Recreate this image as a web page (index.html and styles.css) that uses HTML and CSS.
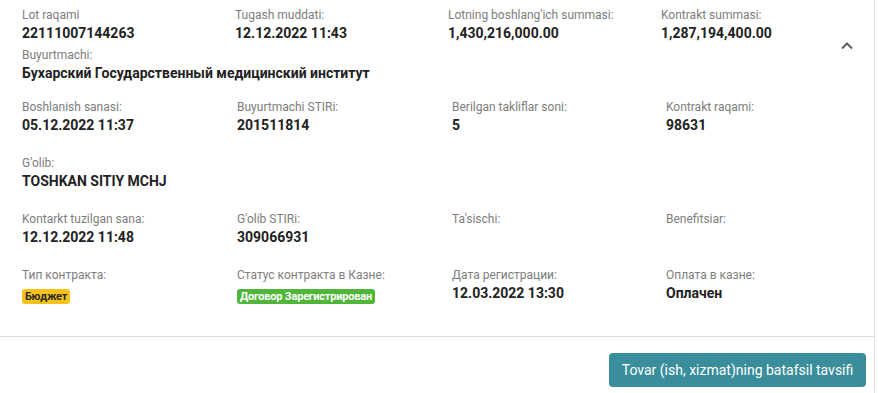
FILE: index.html
```html
<!DOCTYPE html>
<html lang="uz">
<head>
<meta charset="utf-8">
<title>Lot</title>
<link rel="stylesheet" href="styles.css">
</head>
<body>
<div class="card">
  <div class="body">
    <div class="head-grid">
      <div class="field"><div class="label">Lot raqami</div><div class="value">22111007144263</div></div>
      <div class="field"><div class="label">Tugash muddati:</div><div class="value">12.12.2022 11:43</div></div>
      <div class="field"><div class="label">Lotning boshlang'ich summasi:</div><div class="value">1,430,216,000.00</div></div>
      <div class="field"><div class="label">Kontrakt summasi:</div><div class="value">1,287,194,400.00</div></div>
      <div class="toggle">
        <svg width="14" height="9" viewBox="0 0 14 9"><path d="M2 7.5 L7 2.5 L12 7.5" fill="none" stroke="#5f5f5f" stroke-width="2"/></svg>
      </div>
      <div class="field wide"><div class="label">Buyurtmachi:</div><div class="value">Бухарский Государственный медицинский институт</div></div>
    </div>
    <div class="grid">
      <div class="field"><div class="label">Boshlanish sanasi:</div><div class="value">05.12.2022 11:37</div></div>
      <div class="field"><div class="label">Buyurtmachi STIRi:</div><div class="value">201511814</div></div>
      <div class="field"><div class="label">Berilgan takliflar soni:</div><div class="value">5</div></div>
      <div class="field"><div class="label">Kontrakt raqami:</div><div class="value">98631</div></div>

      <div class="field full"><div class="label">G'olib:</div><div class="value">TOSHKAN SITIY MCHJ</div></div>

      <div class="field"><div class="label">Kontarkt tuzilgan sana:</div><div class="value">12.12.2022 11:48</div></div>
      <div class="field"><div class="label">G'olib STIRi:</div><div class="value">309066931</div></div>
      <div class="field"><div class="label">Ta'sischi:</div><div class="value"></div></div>
      <div class="field"><div class="label">Benefitsiar:</div><div class="value"></div></div>

      <div class="field"><div class="label">Тип контракта:</div><div class="value"><span class="badge badge-yellow">Бюджет</span></div></div>
      <div class="field"><div class="label">Статус контракта в Казне:</div><div class="value"><span class="badge badge-green">Договор Зарегистрирован</span></div></div>
      <div class="field"><div class="label">Дата регистрации:</div><div class="value">12.03.2022 13:30</div></div>
      <div class="field"><div class="label">Оплата в казне:</div><div class="value">Оплачен</div></div>
    </div>
  </div>
  <div class="footer">
    <button class="btn" type="button">Tovar (ish, xizmat)ning batafsil tavsifi</button>
  </div>
</div>
</body>
</html>
```
FILE: styles.css
```css
html, body {
  margin: 0;
  padding: 0;
  background: #ffffff;
}
body {
  font-family: Roboto, "Noto Sans", Arial, sans-serif;
  color: #222222;
}
.card {
  width: 874px;
  height: 393px;
  border-right: 1px solid #e2e2e2;
  box-sizing: content-box;
  display: flex;
  flex-direction: column;
}
.body {
  padding: 7px 0 0 22px;
  height: 337px;
  flex: none;
  box-sizing: border-box;
  border-bottom: 1px solid #dcdcdc;
}
.head-grid {
  display: grid;
  grid-template-columns: 213px 213px 213px 1fr 52px;
  row-gap: 4px;
}
.head-grid .wide {
  grid-column: 1 / 5;
}
.toggle {
  grid-column: 5;
  grid-row: 1 / 3;
  display: flex;
  align-items: center;
  padding-left: 18px;
}
.toggle svg {
  display: block;
}
.grid {
  margin-top: 16px;
  display: grid;
  grid-template-columns: 215px 215px 214px 1fr;
  row-gap: 20px;
}
.grid .full {
  grid-column: 1 / 5;
}
.label {
  font-size: 12px;
  line-height: 16px;
  color: #7d7d7d;
  white-space: nowrap;
}
.value {
  font-size: 14px;
  line-height: 20px;
  min-height: 20px;
  font-weight: 700;
  color: #222222;
  white-space: nowrap;
}
.badge {
  display: inline-block;
  font-size: 11px;
  line-height: 15px;
  font-weight: 700;
  padding: 0 3px;
  border-radius: 3px;
  margin-top: 6px;
  vertical-align: top;
  letter-spacing: -0.2px;
}
.badge-yellow {
  background: #f7c31a;
  color: #2a2a2a;
}
.badge-green {
  background: #4fb63a;
  color: #ffffff;
}
.footer {
  flex: 1;
  display: flex;
  justify-content: flex-end;
  align-items: flex-start;
  padding: 16px 8px 0 0;
}
.btn {
  font-family: Roboto, "Noto Sans", Arial, sans-serif;
  font-size: 14px;
  color: #ffffff;
  background: #3a8d9a;
  border: none;
  border-radius: 4px;
  height: 34px;
  width: 257px;
  padding: 0 12px;
  cursor: pointer;
}
```
